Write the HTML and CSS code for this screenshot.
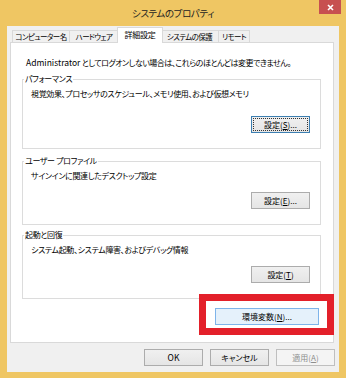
FILE: index.html
```html
<!DOCTYPE html>
<html lang="ja">
<head>
<meta charset="utf-8">
<title>システムのプロパティ</title>
<link rel="stylesheet" href="styles.css">
</head>
<body>
<div class="window">
  <div class="titlebar">
    <span></span>
    <span class="title">システムのプロパティ</span>
    <span class="close"><svg width="7" height="7" viewBox="0 0 7 7"><path d="M1 1L6 6M6 1L1 6" stroke="#fff" stroke-width="1.6"/></svg></span>
  </div>
  <div class="client">
    <div class="tabs">
      <div class="tab w-comp">コンピューター名</div>
      <div class="tab w-hw">ハードウェア</div>
      <div class="tab active">詳細設定</div>
      <div class="tab w-sys">システムの保護</div>
      <div class="tab w-rem">リモート</div>
    </div>
    <div class="panel">
      <p class="note"><span class="latin">Administrator</span> としてログオンしない場合は、これらのほとんどは変更できません。</p>
      <fieldset class="group perf">
        <legend>パフォーマンス</legend>
        <p class="desc">視覚効果、プロセッサのスケジュール、メモリ使用、および仮想メモリ</p>
        <div class="act"><button class="btn focus">設定(<u>S</u>)...</button></div>
      </fieldset>
      <fieldset class="group">
        <legend>ユーザー プロファイル</legend>
        <p class="desc">サインインに関連したデスクトップ設定</p>
        <div class="act"><button class="btn">設定(<u>E</u>)...</button></div>
      </fieldset>
      <fieldset class="group last">
        <legend>起動と回復</legend>
        <p class="desc">システム起動、システム障害、およびデバッグ情報</p>
        <div class="act"><button class="btn">設定(<u>T</u>)</button></div>
      </fieldset>
      <div class="envrow"><button class="btn env">環境変数(<u>N</u>)...</button></div>
    </div>
    <div class="footer">
      <button class="btn"><span class="latin">OK</span></button>
      <button class="btn">キャンセル</button>
      <button class="btn disabled">適用(<u>A</u>)</button>
    </div>
  </div>
  <div class="highlight"></div>
</div>
</body>
</html>
```
FILE: styles.css
```css
html, body {
  margin: 0;
  padding: 0;
}
body {
  width: 346px;
  height: 378px;
  overflow: hidden;
  font-family: "Noto Sans CJK JP", "Noto Sans", sans-serif;
  font-feature-settings: "palt";
  font-size: 8px;
  letter-spacing: -0.35px;
  line-height: 12px;
  color: #000;
}
.latin {
  font-size: 8.5px;
  letter-spacing: 0;
}
.window {
  position: relative;
  width: 346px;
  height: 378px;
  background: #efc663;
  display: flex;
  flex-direction: column;
}
.titlebar {
  height: 26px;
  display: grid;
  grid-template-columns: 1fr auto 1fr;
  align-items: center;
}
.title {
  font-size: 9.5px;
  letter-spacing: -0.4px;
  line-height: 14px;
  color: #222;
  padding-bottom: 1px;
}
.close {
  justify-self: end;
  align-self: start;
  width: 22px;
  height: 14px;
  margin-right: 5px;
  background: #c75050;
  display: flex;
  align-items: center;
  justify-content: center;
}
.client {
  flex: 1;
  margin: 0 7px 6px 7px;
  background: #f0f0f0;
  padding: 1px 4px 0 3px;
  display: flex;
  flex-direction: column;
}
.tabs {
  display: flex;
  align-items: flex-end;
  height: 15px;
  padding-left: 2px;
  position: relative;
  z-index: 1;
  font-size: 7.5px;
  letter-spacing: -0.6px;
}
.tab {
  box-sizing: border-box;
  height: 12px;
  line-height: 11px;
  padding: 0;
  text-align: center;
  border: 1px solid #d9d9d9;
  border-bottom: none;
  background: #f0f0f0;
  white-space: nowrap;
}
.tab + .tab {
  border-left: none;
}
.w-comp { width: 58px; }
.w-hw { width: 49px; }
.w-sys { width: 58px; }
.w-rem { width: 31px; }
.tab.active {
  width: 46px;
  height: 16px;
  line-height: 13px;
  margin: 0 -2px -1px -2px;
  border-left: 1px solid #d9d9d9;
  background: #fff;
  position: relative;
  z-index: 2;
  font-size: 8px;
  letter-spacing: -0.2px;
}
.tab.active + .tab {
  border-left: none;
}
.panel {
  width: 324px;
  height: 301px;
  box-sizing: border-box;
  border: 1px solid #d9d9d9;
  background: #fff;
  padding: 13px 0 0 0;
  display: flex;
  flex-direction: column;
}
.note {
  margin: 0 0 4px 15px;
  white-space: nowrap;
  letter-spacing: -0.5px;
}
.group {
  margin: 0 12px 0 11px;
  padding: 3px 10px 15px 8px;
  border: 1px solid #dcdcdc;
  min-width: 0;
}
.group + .group {
  margin-top: 6px;
}
.group.last {
  margin-top: 4px;
}
.group legend {
  padding: 0 1px;
  margin-left: -7px;
  line-height: 12px;
}
.group .act {
  margin-top: 10px;
}
.group.perf .act {
  margin-top: 16px;
}
.desc {
  margin: 0;
}
.act, .envrow {
  display: flex;
  justify-content: flex-end;
}
.envrow {
  margin: 9px 14px 0 0;
}
.btn {
  box-sizing: border-box;
  height: 17px;
  width: 59px;
  padding: 0;
  border: 1px solid #acacac;
  background: linear-gradient(#f0f0f0, #e5e5e5);
  font: inherit;
  line-height: 14px;
  color: #000;
  white-space: nowrap;
}
.btn.focus {
  border-color: #3c7fb1;
  outline: 1px dotted #333;
  outline-offset: -3px;
}
.btn.env {
  width: 104px;
  background: #e5f1fb;
  border-color: #7eb4ea;
}
.btn.disabled {
  color: #8d8d8d;
  border-color: #bfbfbf;
  background: #f4f4f4;
}
.footer {
  display: flex;
  justify-content: flex-end;
  gap: 7px;
  margin-top: 6px;
}
.highlight {
  position: absolute;
  left: 199px;
  top: 294px;
  width: 135px;
  height: 41px;
  box-sizing: border-box;
  border: 7px solid #e3202a;
}
```
